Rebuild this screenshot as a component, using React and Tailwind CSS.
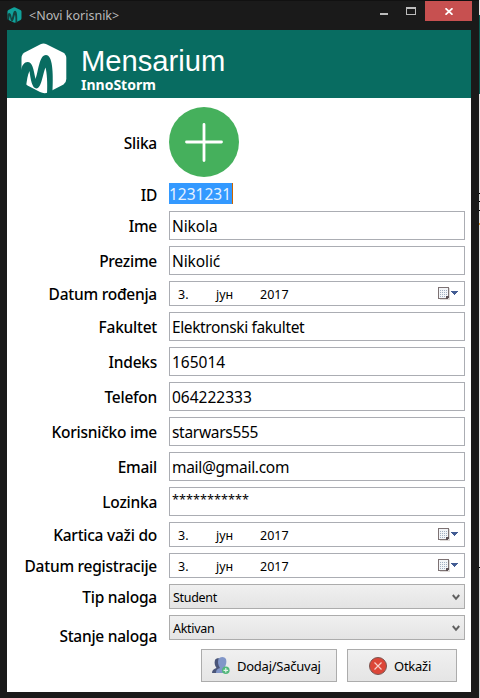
import React from 'react';

const LogoShape = ({ className, hex, wave }) => (
  <svg viewBox="0 0 46 51" className={className}>
    <path
      d="M19.500 1.200Q22.500 -.3 25.500 1.200L42 9.500Q45.300 11.500 45.300 15V36Q45.300 39.500 42.500 41.500L27 49.500Q23 51 19 49L6.500 42.500Q.5 38.500 .5 35V15Q.5 11.500 3.500 9.500Z"
      fill={hex}
    />
    <path
      d="M0 27C1 22 3.500 19 6.500 19C11.500 19 12.500 26 14.500 36C17.500 29 18 12 25 12C31.500 12 32.500 29 31.500 49L26 51C26.500 40 26 30 24.500 24.500C22 30 20.500 45.500 15.500 45.500C11 45.500 9.500 36 8.500 28C6.500 32 6 37 5.200 42.300L0 40Z"
      fill={wave}
    />
  </svg>
);

const CalendarIcon = () => (
  <svg width="22" height="14" viewBox="0 0 22 14" shapeRendering="crispEdges">
    <path d="M2 1H12V13H2Z" fill="#dedbd9" />
    <path d="M0 0H11V10L9 12H0Z" fill="#7d7273" />
    <path d="M1 1H10V9L8 11H1Z" fill="#f3f5f8" />
    <path d="M8 11V9H11V10L9 12H8Z" fill="#5d5256" />
    <path
      d="M2 3h1v1h-1zM4 3h1v1h-1zM6 3h1v1h-1zM8 3h1v1h-1zM2 5h1v1h-1zM4 5h1v1h-1zM6 5h1v1h-1zM8 5h1v1h-1zM2 7h1v1h-1zM4 7h1v1h-1zM6 7h1v1h-1zM8 7h1v1h-1zM2 9h1v1h-1zM4 9h1v1h-1zM6 9h1v1h-1z"
      fill="#a3b0c2"
    />
    <path d="M13 4h7v1h-1v1h-1v1h-1v1h-1v-1h-1v-1h-1v-1h-1z" fill="#425c93" />
  </svg>
);

const Row = ({ label, labelClass = '', children }) => (
  <div className="flex gap-3">
    <div
      className={`flex w-[150px] shrink-0 items-center justify-end whitespace-nowrap text-[15.5px] font-medium leading-5 tracking-[-0.25px] ${labelClass}`}
    >
      <span>{label}</span>
    </div>
    {children}
  </div>
);

const TextField = ({ value, className = 'text-[15.5px] tracking-[-0.3px]' }) => (
  <div className={`flex h-[29px] w-[296px] items-center border border-[#abadb3] pl-[2px] leading-5 ${className}`}>
    {value}
  </div>
);

const DateField = () => (
  <div className="flex h-[25px] w-[296px] items-center border border-[#abadb3] pl-2 pr-1 pt-px text-[12.5px] leading-4">
    <span className="w-[38px] pt-[2px]">3.</span>
    <span className="w-11 pt-[2px]">јун</span>
    <span className="grow pt-[2px]">2017</span>
    <CalendarIcon />
  </div>
);

const SelectField = ({ value }) => (
  <div className="flex h-[25px] w-[296px] items-center justify-between border border-[#acacac] bg-linear-to-b from-[#f0f0f0] to-[#e4e4e4] pl-[3px] pr-1 pt-px text-[12.5px] leading-4 tracking-[-0.3px]">
    <span className="pt-px">{value}</span>
    <svg width="8" height="7" viewBox="0 0 8 7">
      <path d="M.8 1L4 4.800L7.200 1" fill="none" stroke="#606060" strokeWidth="2" />
    </svg>
  </div>
);

export default function App() {
  return (
    <div className="flex h-[698px] w-[480px] overflow-hidden bg-[#1a1a1a] font-['Noto_Sans','Open_Sans',sans-serif] text-black">
      <div className="flex w-[479px] flex-col border-t border-[#111111]">
        <div className="flex h-[29px] shrink-0 pl-[7px]">
          <LogoShape className="mt-[6px] h-4 w-[15px]" hex="#10a19a" wave="#14433f" />
          <span className="ml-[7px] mt-[6px] text-[12.5px] leading-[18px] text-[#b9b9b9]">&lt;Novi korisnik&gt;</span>
          <div className="ml-auto mr-[7px] flex">
            <svg width="45" height="20" viewBox="0 0 45 20" shapeRendering="crispEdges">
              <path d="M0 12h8v2H0z" fill="#bcbcbc" />
              <path d="M26 6h10v8H26zM27 8v5h8V8z" fill="#bcbcbc" fillRule="evenodd" />
            </svg>
            <div className="flex h-5 w-[47px] items-center justify-center bg-[#c75050]">
              <svg width="8" height="7" viewBox="0 0 8 7" className="mt-px">
                <path d="M.5 .3L7.500 6.700M7.500 .3L.5 6.700" stroke="#fff" strokeWidth="1.800" />
              </svg>
            </div>
          </div>
        </div>

        <div className="mx-[7px] flex h-[662px] w-[464px] flex-col bg-white">
          <header className="flex h-[68px] shrink-0 bg-[#086c61] pl-[14px] text-white">
            <LogoShape className="mt-[13px] h-[51px] w-[46px]" hex="#ffffff" wave="#086c61" />
            <div className="ml-[14px] mt-[18px] flex flex-col">
              <span className="font-['Liberation_Sans',sans-serif] text-[29.2px] leading-[26px]">Mensarium</span>
              <span className="mt-[3px] text-[14px] font-bold leading-4">InnoStorm</span>
            </div>
          </header>

          <main className="flex flex-col gap-[6px] pt-[9px]">
            <Row label="Slika" labelClass="pt-px">
              <svg width="70" height="70" viewBox="0 0 70 70">
                <circle cx="35" cy="35" r="35" fill="#45b05c" />
                <path d="M17.500 35H52.500M35 17.500V53.500" stroke="#fff" strokeWidth="2.800" strokeLinecap="round" />
              </svg>
            </Row>
            <Row label="ID" labelClass="pt-px">
              <div className="mb-px flex h-[21px] w-16 items-center border-r border-[#cc6600] bg-[#3399ff] pt-[2px] text-[15.5px] leading-[19px] text-[#e6f2ff]">
                1231231
              </div>
            </Row>
            <Row label="Ime"><TextField value="Nikola" className="text-[15.5px] tracking-[-0.1px]" /></Row>
            <Row label="Prezime"><TextField value="Nikolić" className="text-[15.5px] tracking-[-0.1px]" /></Row>
            <Row label="Datum rođenja"><DateField /></Row>
            <Row label="Fakultet"><TextField value="Elektronski fakultet" className="text-[15.5px] tracking-[-0.38px]" /></Row>
            <Row label="Indeks"><TextField value="165014" className="text-[15.5px]" /></Row>
            <Row label="Telefon"><TextField value="064222333" className="text-[15.5px]" /></Row>
            <Row label="Korisničko ime"><TextField value="starwars555" /></Row>
            <Row label="Email"><TextField value="mail@gmail.com" /></Row>
            <Row label="Lozinka"><TextField value="***********" className="pb-[5px] text-[12.7px]" /></Row>
            <Row label="Kartica važi do"><DateField /></Row>
            <Row label="Datum registracije"><DateField /></Row>
            <Row label="Tip naloga"><SelectField value="Student" /></Row>
            <Row label="Stanje naloga" labelClass="-mb-[6px] pt-[11px]"><SelectField value="Aktivan" /></Row>
          </main>

          <div className="mt-[9px] flex justify-end gap-[10px] pr-[14px] text-[13px] tracking-[-0.25px]">
            <div className="flex h-[33px] w-[136px] items-center border border-[#acacac] bg-linear-to-b from-[#f0f0f0] to-[#e5e5e5] pl-[9px]">
              <svg width="19" height="19" viewBox="0 0 19 19" className="mr-[7px] shrink-0">
                <path d="M1 17C1 14 3 13 5.500 12C4 10 3 7 4 4C5 2 9 1.500 10 4V17Z" fill="#4a5578" />
                <path d="M5 17C5 14 6 13 9 12C7 9 6.500 6 7.500 3C9 .3 13.500 .3 15 3C16 6 15 9 13.500 12C15.500 13 17 14 17 17Z" fill="#8196c8" />
                <circle cx="14.800" cy="14.300" r="3.800" fill="#52b77b" />
                <path d="M12.500 14.300h4.600M14.800 12v4.600" stroke="#e2f5e9" strokeWidth="1.200" />
              </svg>
              <span className="pt-[2px]">Dodaj/Sačuvaj</span>
            </div>
            <div className="flex h-[33px] w-[110px] items-center border border-[#acacac] bg-linear-to-b from-[#f0f0f0] to-[#e5e5e5] pl-[21px]">
              <svg width="18" height="18" viewBox="0 0 18 18" className="mr-[7px] shrink-0">
                <circle cx="9" cy="9" r="8.500" fill="#dc4638" stroke="#7a5551" />
                <path d="M5.500 5.500L12.500 12.500M12.500 5.500L5.500 12.500" stroke="#f7d0cb" strokeWidth="1.200" />
              </svg>
              <span className="pt-[2px]">Otkaži</span>
            </div>
          </div>
        </div>
      </div>
      <div className="flex w-px flex-col bg-[#e6e6e6]">
        <div className="mt-[15px] h-[79px] bg-[#0a5c53]" />
        <div className="mt-[99px] h-px bg-black" />
        <div className="mt-[7px] h-px bg-black" />
        <div className="mt-2 h-px bg-black" />
        <div className="mt-3 h-[2px] bg-[#e5a03c]" />
        <div className="mt-[342px] h-px bg-black" />
        <div className="h-[130px] bg-[#d4d4d4]" />
      </div>
    </div>
  );
}
